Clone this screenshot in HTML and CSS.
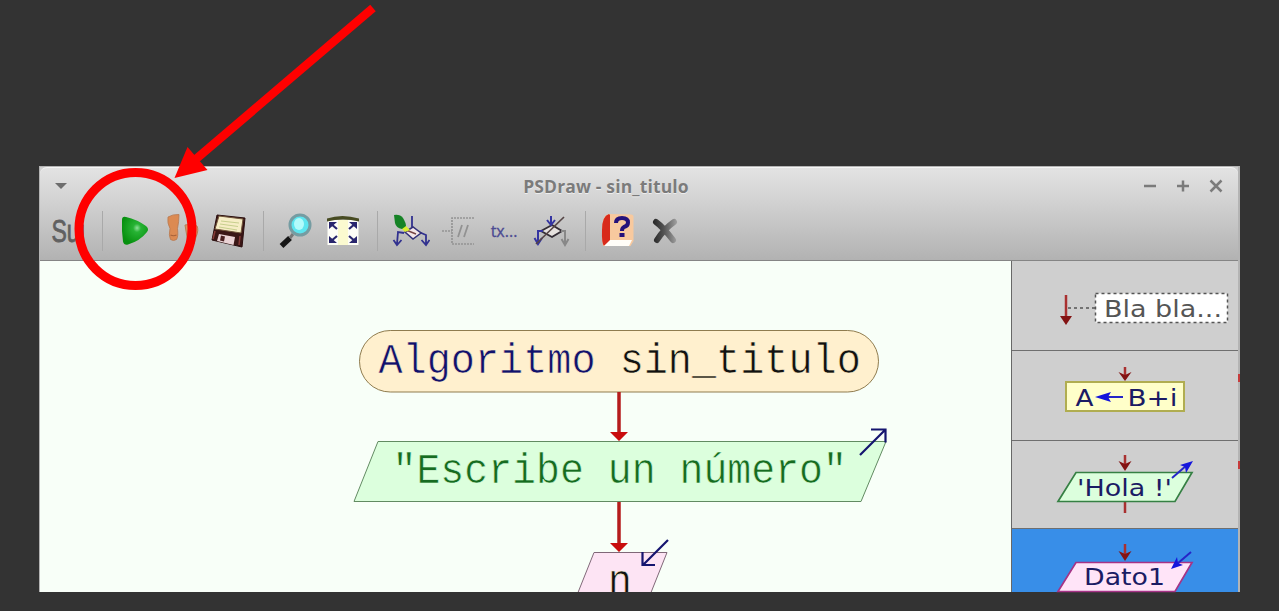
FILE: index.html
```html
<!DOCTYPE html>
<html lang="es">
<head>
<meta charset="utf-8">
<title>PSDraw - sin_titulo</title>
<link rel="stylesheet" href="styles.css">
</head>
<body>
<main class="window">
  <header class="chrome">
    <div class="titlebar">
      <svg class="menu-caret" width="14" height="8" viewBox="0 0 14 8"><path d="M1 1h12L7 7z"/></svg>
      <h1 class="title">PSDraw - sin_titulo</h1>
      <div class="controls">
        <svg width="14" height="14" viewBox="0 0 14 14"><path d="M1 7h12"/></svg>
        <svg width="14" height="14" viewBox="0 0 14 14"><path d="M1 7h12M7 1.500v11"/></svg>
        <svg width="14" height="14" viewBox="0 0 14 14"><path d="M1.500 1.500l11 11M12.500 1.500l-11 11"/></svg>
      </div>
    </div>
    <nav class="toolbar">
      <span class="tool tool-sub"><span class="sub-text">Sui</span></span>
      <i class="sep"></i>
      <svg class="tool" viewBox="0 0 40 40">
        <defs><radialGradient id="gplay" cx=".58" cy=".4" r=".6"><stop offset="0" stop-color="#8fe09a"/><stop offset=".25" stop-color="#27b334"/><stop offset="1" stop-color="#07900f"/></radialGradient></defs>
        <path d="M7 9q0-4 4-3 11 2.500 20 9 3.500 3 1 6-7 9-19 12.500-4 1-5-3-1.500-10-1-21.500z" fill="url(#gplay)"/>
      </svg>
      <svg class="tool" viewBox="0 0 40 40">
        <path d="M6 6q5-3 11-2.500 0 7-1.500 14 1 8-1 11-3 2-6 0-2-4-.5-11Q5 12 6 6z" fill="#dc8a52" stroke="#b87850" stroke-width=".8"/>
        <path d="M8.500 24q3 1.500 6 0" stroke="#a8623a" fill="none" stroke-width="1.200"/>
        <path d="M23 14q7-2 12 1 2 4-1 11l-2 7q-4 2-6-1z" fill="#dc9363" stroke="#b77b55"/>
      </svg>
      <svg class="tool" viewBox="0 0 40 40">
        <path d="M8 4l28 3-3 29L3 29z" fill="#3b1716" stroke="#2a0e0e" stroke-linejoin="round"/>
        <path d="M10 5l24 3-2 14L6 18z" fill="#f6edc5" stroke="#71563b"/>
        <path d="M12 10l18 2M11 13l18 2.500M10 16l18 3" stroke="#c7cf8d"/>
        <path d="M10 23l16 3-1.500 8L8 30z" fill="#ead3d5"/><path d="M12 24.500l4 1-1 5-4-1z" fill="#4a2020"/>
        <path d="M6 20l-2 8M31 25l-1 9" stroke="#873b38" stroke-width="1.500"/>
      </svg>
      <i class="sep"></i>
      <svg class="tool" viewBox="0 0 40 40">
        <path d="M14 27l-8.500 8" stroke="#161616" stroke-width="5.500"/>
        <path d="M17 23l-3 4" stroke="#777" stroke-width="3"/>
        <circle cx="24" cy="14" r="10" fill="#5de5ef" stroke="#759ca2" stroke-width="3"/>
        <ellipse cx="23" cy="13" rx="5" ry="6" fill="#b2fbfb"/>
      </svg>
      <svg class="tool" viewBox="0 0 40 40">
        <path d="M4.500 9h31v25h-31z" fill="#fdfdf6"/>
        <path d="M15 9h10v25H15z" fill="#fbfad0"/>
        <path d="M4 7.500q15-5 32 0v3Q20 6.500 4 10.500z" fill="#474b22"/>
        <g fill="none" stroke="#29266d" stroke-width="2.200"><path d="M14 18l-7-6M26 18l7-6M14 25l-7 6M26 25l7 6"/></g>
        <path d="M6 11h8l-8 7zM34 11h-8l8 7zM6 32h8l-8-7zM34 32h-8l8-7z" fill="#29266d"/>
      </svg>
      <i class="sep"></i>
      <svg class="tool" viewBox="0 0 40 40">
        <g fill="none" stroke="#31318f" stroke-width="1.800"><path d="M22 5v11M14 22l-6-1-1 12M29 21l7 3v9M3.500 29L7 34l4.500-5M31.500 29l4.500 5 3.500-5"/></g>
        <path d="M15 21l8-5 8 6-8 6z" fill="#f5e7e8" stroke="#333179" stroke-width="1.500"/>
        <path d="M16 19l10 4" stroke="#774444" stroke-width="1.500"/>
        <path d="M11 17l5-2 4 4-5 2z" fill="#d9ed31"/>
        <path d="M4 4q6-1 9 3 3 5 3 8l-4 3q-6-1-7-6z" fill="#168326"/>
      </svg>
      <svg class="tool" viewBox="0 0 40 40">
        <path d="M37 7H15v26h22M5 20h10" fill="none" stroke="#949494" stroke-width="1.700" stroke-dasharray="2 1"/>
        <path d="M21 26l4-12M27 26l4-12" stroke="#929292" stroke-width="1.800"/>
      </svg>
      <span class="tool tool-text">tx...</span>
      <svg class="tool" viewBox="0 0 40 40">
        <path d="M10 20l11-6 10 6-10 6z" fill="#e6e2df" stroke="#332d35" stroke-width="1.900"/>
        <g fill="none" stroke="#3434a1" stroke-width="2"><path d="M20 5v9M16 9l4 5 4-5M12 20H7v12M3.500 27L7 33l4-6"/></g>
        <path d="M30 20h4v12M30.500 28l3.500 6 3.500-6" fill="none" stroke="#888" stroke-width="2"/>
        <path d="M5 33L33 6" stroke="#564646" stroke-width="1.700"/>
      </svg>
      <i class="sep"></i>
      <svg class="tool" viewBox="0 0 40 40">
        <path d="M11 3l22 .5q3 0 2.500 4V30l-3 5H5q-2-13 0-25 1-6 6-7z" fill="#f8c99e"/>
        <path d="M11 3q-7 2-7 16-.5 13 2 16l6-5V4z" fill="#d82a1b"/>
        <path d="M12 29h22l-3 6H6z" fill="#fffdf8"/>
        <path d="M18 12q0-5 6-5 6 0 6 4.500 0 3.500-4 4.500-2 1-2 4" fill="none" stroke="#25117a" stroke-width="4"/>
        <path d="M21.500 22h5v4h-5z" fill="#25117a"/>
      </svg>
      <svg class="tool" viewBox="0 0 40 40">
        <defs><linearGradient id="gx" gradientUnits="userSpaceOnUse" x1="8" x2="33" y1="0" y2="0"><stop offset="0" stop-color="#272727"/><stop offset=".45" stop-color="#555"/><stop offset="1" stop-color="#a7a7a7"/></linearGradient></defs>
        <g fill="none" stroke="url(#gx)" stroke-width="6" stroke-linecap="round"><path d="M11 11q7 5 17 18"/><path d="M29 11q-10 7-17 18"/></g>
      </svg>
    </nav>
  </header>
  <section class="workspace">
    <svg class="flowchart" viewBox="40 261 971 331">
      <g fill="none">
        <rect class="start" x="359.500" y="330.500" width="519" height="61.500" rx="30.750"/>
        <path class="output" d="M378 441.500h508L861 501.500H354z"/>
        <path class="input" d="M594 552.500h73l-20 50h-73z"/>
      </g>
      <g class="flow-lines"><path d="M619 392v42M619 502v43"/></g>
      <path class="flow-heads" d="M610 432h18l-9 9zM610 543h18l-9 9z"/>
      <path class="io-marks" d="M860 455l25-25M871 429.500h14.500v13M668 540l-25 25M642.500 552v13H655"/>
      <text class="code" transform="translate(378.500 372.500) scale(.957 1)"><tspan class="keyword">Algoritmo</tspan> sin_titulo</text>
      <text class="code string" transform="translate(392.500 483) scale(.949 1)">"Escribe un número"</text>
      <text class="code" transform="translate(608 594) scale(.95 1)">n</text>
    </svg>
    <aside class="palette">
      <div class="item">
        <svg viewBox="1012 261 226 89">
          <path class="step" d="M1066 295v24"/><path class="step-head" d="M1060 316h12l-6 9z"/>
          <path class="dash" d="M1068 308h28"/>
          <rect class="dash note" x="1095.500" y="293.500" width="132" height="29"/>
          <text class="label note-label" x="1104" y="317" textLength="118" lengthAdjust="spacingAndGlyphs">Bla bla...</text>
        </svg>
      </div>
      <div class="item">
        <svg viewBox="1012 351 226 89">
          <path class="step" d="M1125 367v12"/><path class="step-head" d="M1118.500 372l6.500 3 6.500-3-6.500 9z"/>
          <rect class="assign" x="1066" y="382" width="118" height="29"/>
          <path class="blue-line" d="M1105 397h18"/><path class="blue-head" d="M1095 397l16-5-3 5 3 5z"/>
          <text class="label" x="1075.500" y="406" textLength="18" lengthAdjust="spacingAndGlyphs">A</text><text class="label" x="1127.500" y="406" textLength="50" lengthAdjust="spacingAndGlyphs">B+i</text>
          <path class="edge-dot" d="M1239 374v8"/>
        </svg>
      </div>
      <div class="item">
        <svg viewBox="1012 441 226 87">
          <path class="step" d="M1125 455v12M1125 502v11"/><path class="step-head" d="M1118.500 461l6.500 3 6.500-3-6.500 10z"/>
          <path class="write" d="M1076 472.500h116l-17 29h-117z"/>
          <path class="blue-line" d="M1172 478l15-13"/><path class="blue-head" d="M1193 461l-13 4 5 2 1 6z"/>
          <text class="label" x="1077" y="496" textLength="95" lengthAdjust="spacingAndGlyphs">'Hola !'</text>
          <path class="edge-dot" d="M1239 461v8"/>
        </svg>
      </div>
      <div class="item selected">
        <svg viewBox="1012 529 226 63">
          <path class="step" d="M1125 544v12"/><path class="step-head" d="M1118.500 551l6.500 3 6.500-3-6.500 10z"/>
          <path class="read" d="M1076 562.500h116l-17 29h-117z"/>
          <path class="blue-line" d="M1191 552l-14 12"/><path class="blue-head" d="M1171 569l12-4-5-2-1-6z"/>
          <text class="label" x="1084" y="585" textLength="81" lengthAdjust="spacingAndGlyphs">Dato1</text>
        </svg>
      </div>
    </aside>
  </section>
</main>
<svg class="callout" viewBox="0 0 400 300">
  <circle cx="135.500" cy="229" r="56.500"/>
  <path class="shaft" d="M373 8L196 159"/>
  <path class="tip" d="M174.500 178l13-31 20 23z"/>
</svg>
</body>
</html>
```
FILE: styles.css
```css
* { box-sizing: border-box; }
body {
  margin: 0;
  height: 611px;
  padding: 166px 39px 19px;
  overflow: hidden;
  background: #333;
  font-family: "Open Sans", "Noto Sans", sans-serif;
}
svg { display: block; }
.window {
  width: 1201px;
  height: 426px;
  display: flex;
  flex-direction: column;
  border: solid #b4b4b4;
  border-width: 1px 2px 0 1px;
  background: #d0d0d0;
}
.chrome {
  height: 94px;
  flex: none;
  display: flex;
  flex-direction: column;
  border-top: 1px solid #f5f5f5;
  border-bottom: 1px solid #858585;
  border-radius: 7px 7px 0 0;
  background: linear-gradient(#e3e3e3, #cfcfcf 42%, #b2b2b2);
}
.titlebar {
  height: 38px;
  display: grid;
  grid-template-columns: 80px 1fr 80px;
  align-items: center;
  padding: 0 15px 2px 14px;
}
.menu-caret { fill: #6d6d6d; }
.title {
  margin: 0 0 0 -65px;
  justify-self: center;
  font-size: 17.500px;
  line-height: 20px;
  font-weight: 700;
  letter-spacing: .15px;
  color: #7b7b7b;
  text-shadow: 0 1px #eee;
  white-space: nowrap;
}
.controls { display: flex; gap: 19px; justify-content: flex-end; }
.controls svg { flex: none; stroke: #7b7b7b; stroke-width: 2.500; fill: none; }
.toolbar { display: flex; align-items: center; gap: 7px; padding: 5px 8px 0; }
.tool { width: 40px; height: 40px; flex: none; }
.sep {
  width: 13px;
  height: 40px;
  flex: none;
  background: linear-gradient(#a9a9a9, #a9a9a9) 7px 0 / 1px 100% no-repeat;
}
.tool-sub, .tool-text { display: flex; align-items: center; justify-content: center; }
.tool-sub { font: 32px "Liberation Sans", sans-serif; color: #606060; }
.sub-text { transform: scaleX(.72); -webkit-text-stroke: .8px #606060; }
.tool-text { font-size: 16px; color: #4b4a92; -webkit-text-stroke: .3px #4b4a92; }
.workspace { flex: 1; min-height: 0; display: grid; grid-template-columns: 971px 1fr; }
.flowchart { width: 971px; height: 331px; background: #f8fff8; }
.start { fill: #fff0ce; stroke: #8f7c4f; }
.output { fill: #dcffdd; stroke: #628b62; }
.input { fill: #fde4f4; stroke: #806878; }
.flow-lines { stroke: #b51c1c; stroke-width: 3.500; }
.flow-heads { fill: #c90d0d; }
.io-marks { fill: none; stroke: #15156f; stroke-width: 2.200; }
.code {
  font: 42px "Liberation Mono", monospace;
  fill: #111;
  stroke: #fff0ce;
  stroke-width: .6px;
  white-space: pre;
}
.keyword { fill: #11116c; }
.string { fill: #176b21; stroke: #dcffdd; }
.palette {
  display: grid;
  grid-template-rows: 90px 90px 88px 63px;
  border-left: 1px solid #686868;
}
.item { background: #cfcfcf; border-bottom: 1px solid #6f6f6f; }
.item svg { width: 226px; height: auto; overflow: visible; }
.selected { background: #388ee8; border: 0; }
.label { font: 22.500px "DejaVu Sans", sans-serif; fill: #1b1b64; }
.note-label { fill: #555; }
.step { stroke: #a93030; stroke-width: 2.500; }
.step-head { fill: #831313; }
.dash { fill: none; stroke: #555; stroke-width: 1.500; stroke-dasharray: 3 3; }
.note { fill: #fff; }
.assign { fill: #ffffc9; stroke: #b0ad50; stroke-width: 2; }
.write { fill: #dcffdd; stroke: #368044; stroke-width: 1.700; }
.read { fill: #ffe4f8; stroke: #a63386; stroke-width: 1.700; }
.blue-line { stroke: #2525c8; stroke-width: 2; }
.blue-head { fill: #1515dc; }
.edge-dot { stroke: #c63b3b; stroke-width: 2; }
.callout { position: absolute; left: 0; top: 0; width: 400px; height: 300px; pointer-events: none; }
.callout circle { fill: none; stroke: #f00; stroke-width: 9; }
.shaft { stroke: #f00; stroke-width: 8.500; }
.tip { fill: #f00; }
```
